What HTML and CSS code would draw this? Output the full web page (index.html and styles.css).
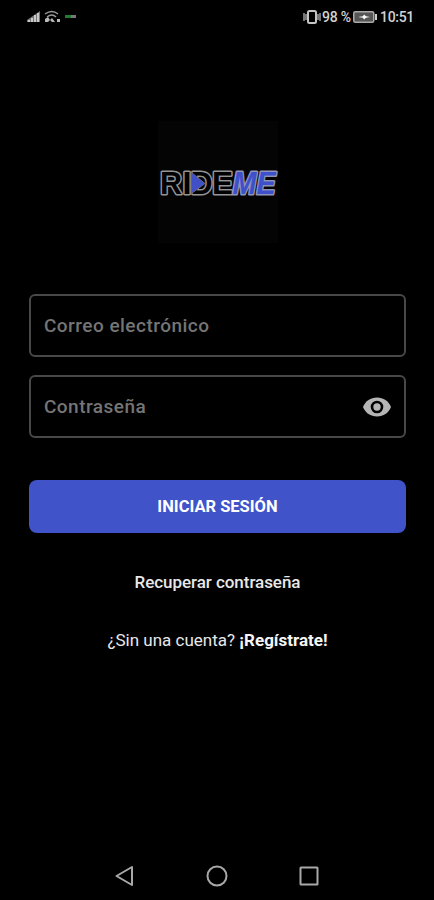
FILE: index.html
```html
<!DOCTYPE html>
<html lang="es">
<head>
<meta charset="utf-8">
<title>RideMe</title>
<link rel="stylesheet" href="styles.css">
</head>
<body>
<div class="screen">
  <header class="status">
    <svg class="status-left" width="54" height="16" viewBox="0 0 54 16">
      <path d="M0 14v-2l13-9v11z" fill="#777"/>
      <g fill="#c8c8c8"><path d="M1 12h2v2H1zM4 10h2v4H4zM7 7h2v7H7zM10 5h2v9h-2z"/></g>
      <g fill="none" stroke="#999" stroke-width="1.5"><path d="M18 6q7-5 13 0M20 9q5-4 9 0"/></g>
      <path d="M18 14v-3l3-2 2 3 2-2 3 4h-3l-2-2-2 2zM30 11h3v3h-3z" fill="#b8b8b8"/>
      <path d="M38 7h6v3h-6z" fill="#247c31"/><path d="M44 7h5v3h-5z" fill="#777"/>
    </svg>
    <div class="status-right">
      <svg width="18" height="14" viewBox="0 0 18 14" fill="none" stroke="#c4c4c4"><rect x="5" y="1" width="8" height="12" rx="1.500" stroke-width="2"/><path d="M1 3v8M3 4v6M15 4v6M17 3v8" stroke-width="1.200"/></svg>
      <span class="percent">98 %</span>
      <svg class="battery" width="24" height="12" viewBox="0 0 24 12"><rect x=".75" y=".75" width="20" height="10.500" rx="1.500" fill="#555" stroke="#aaa" stroke-width="1.500"/><path d="M22 3h2v6h-2z" fill="#ccc"/><path d="M5 6l5-.7L11 3.500l2 1.800 4 .7-4 .7-2 1.800-1-1.800z" fill="#fff"/></svg>
      <span class="clock">10:51</span>
    </div>
  </header>
  <main>
    <svg class="logo" width="120" height="122" viewBox="0 0 120 122" role="img" aria-label="RIDEME">
      <rect width="120" height="122" fill="#040404"/>
      <g class="logo-ride">
        <text x="2" y="73" textLength="22" lengthAdjust="spacingAndGlyphs">R</text>
        <text x="24.500" y="73" textLength="9" lengthAdjust="spacingAndGlyphs">I</text>
        <text x="32.500" y="73" textLength="22" lengthAdjust="spacingAndGlyphs">D</text>
        <text x="54" y="73" textLength="21" lengthAdjust="spacingAndGlyphs">E</text>
      </g>
      <path d="M33 51v22l14-10.500z" fill="#3f50c8" stroke="#777" stroke-width=".7"/>
      <text class="logo-me" x="74.500" y="73" textLength="43" lengthAdjust="spacingAndGlyphs">ME</text>
    </svg>
    <form>
      <div class="field"><span>Correo electrónico</span></div>
      <div class="field"><span>Contraseña</span>
        <svg class="eye" width="28" height="20" viewBox="0 0 28 20"><path d="M0 10C2.500 4 7.500.5 14 .5S25.500 4 28 10c-2.500 6-7.500 9.500-14 9.500S2.500 16 0 10z" fill="#b5b5b5"/><circle cx="14" cy="10" r="5" fill="#b5b5b5" stroke="#000" stroke-width="2.600"/></svg>
      </div>
      <button type="button">INICIAR SESIÓN</button>
    </form>
    <a class="recover">Recuperar contraseña</a>
    <p class="signup">¿Sin una cuenta? <b>¡Regístrate!</b></p>
  </main>
  <nav>
    <svg width="22" height="22" viewBox="0 0 22 22"><path d="M2.500 11L18 2v18z"/></svg>
    <svg width="22" height="22" viewBox="0 0 22 22"><circle cx="11" cy="11" r="9.500"/></svg>
    <svg width="22" height="22" viewBox="0 0 22 22"><rect x="2.500" y="2.500" width="17" height="17" rx=".5"/></svg>
  </nav>
</div>
</body>
</html>
```
FILE: styles.css
```css
* { box-sizing: border-box; }
body { margin: 0; background: #000; color: #e8e8e8; font-family: Roboto, sans-serif; }
.screen { width: 434px; height: 900px; display: flex; flex-direction: column; background: #000; overflow: hidden; }
.status { height: 34px; padding: 0 20px 0 27px; display: flex; justify-content: space-between; align-items: center; color: #d2d2d2; }
.status-left { margin-bottom: 2px; }
.status-right { display: flex; align-items: center; font-size: 14px; font-weight: 500; line-height: 16px; }
.percent { width: 29px; margin-left: 1px; white-space: nowrap; letter-spacing: -.2px; }
.battery { margin: 0 3px 0 2px; }
.clock { width: 34px; letter-spacing: -.3px; }
main { flex: 1; padding: 87px 28px 0 29px; display: flex; flex-direction: column; align-items: center; }
.logo { flex: none; }
.logo text { font-family: "Liberation Sans", Arial, sans-serif; font-weight: bold; font-size: 31px; paint-order: stroke; stroke: #949494; stroke-width: 3px; stroke-linejoin: round; }
.logo-ride { fill: #000; }
.logo .logo-me { fill: #3e50cc; font-style: italic; stroke: #8f93b5; }
form { width: 100%; margin-top: 51px; }
.field { height: 63px; margin-bottom: 18px; padding: 0 13px; border: 2px solid #484848; border-radius: 6px; display: flex; align-items: center; justify-content: space-between; color: #757575; font-size: 19px; font-weight: 500; letter-spacing: .47px; }
button { display: block; width: 100%; height: 53px; margin-top: 42px; padding: 0; border: 0; border-radius: 8px; background: #4053c9; color: #fff; font: 700 16.5px Roboto, sans-serif; }
.recover { margin-top: 39px; font-size: 17px; line-height: 20px; font-weight: 500; letter-spacing: -.05px; }
.signup { margin: 38px 0 0; font-size: 17px; line-height: 20px; white-space: nowrap; }
.signup b { color: #f5f5f5; }
nav { height: 48px; padding: 0 114px; display: flex; justify-content: space-between; align-items: center; }
nav svg { fill: none; stroke: #a8a8a8; stroke-width: 2; stroke-linejoin: round; }
```
